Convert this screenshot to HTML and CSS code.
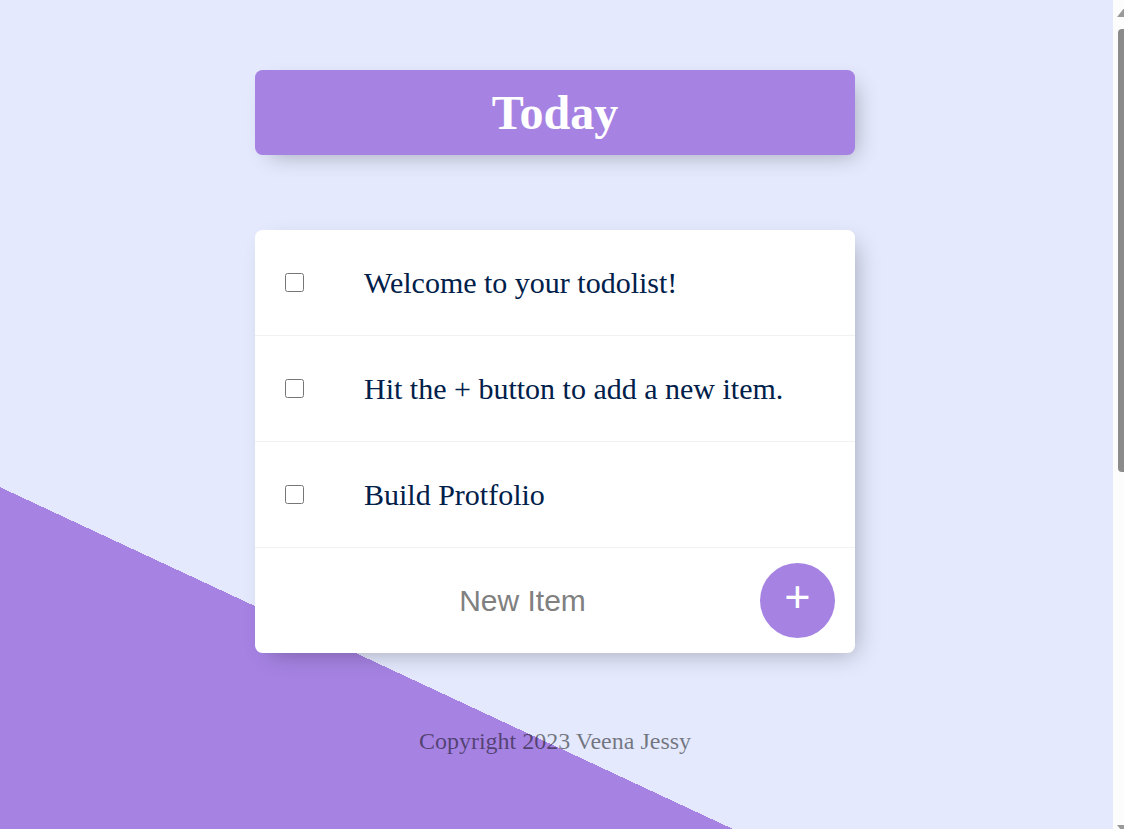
FILE: index.html
```html
<!DOCTYPE html>
<html lang="en">
<head>
<meta charset="utf-8">
<title>To-Do List</title>
<link rel="stylesheet" href="styles.css">
</head>
<body>
  <div class="page">
    <div class="box heading">
      <h1 class="title">Today</h1>
    </div>

    <div class="box list">
      <div class="item">
        <input class="check" type="checkbox">
        <p class="text">Welcome to your todolist!</p>
      </div>
      <div class="item">
        <input class="check" type="checkbox">
        <p class="text">Hit the + button to add a new item.</p>
      </div>
      <div class="item">
        <input class="check" type="checkbox">
        <p class="text">Build Protfolio</p>
      </div>
      <form class="item new-item" onsubmit="return false;">
        <input class="new-input" type="text" name="newItem" placeholder="New Item" autocomplete="off">
        <button class="add-btn" type="submit" name="list" value="Today">+</button>
      </form>
    </div>

    <footer class="footer">Copyright 2023 Veena Jessy</footer>
  </div>

  <div class="scrollbar" aria-hidden="true">
    <svg class="scrollbar-svg" width="11" height="829" viewBox="0 0 11 829">
      <polygon points="12,7 4,17 20,17" fill="#9a9a9a"/>
      <rect x="5" y="29" width="12" height="443" rx="4" ry="4" fill="#8b8b8b"/>
      <polygon points="4,825 20,825 12,835" fill="#9a9a9a"/>
    </svg>
  </div>
</body>
</html>
```

FILE: styles.css
```css
html {
  background-color: #E4E9FD;
  background-image: linear-gradient(25deg, #A683E3 50%, #E4E9FD 50%);
  background-repeat: no-repeat;
  min-height: 1492px;
  margin-right: 14px;
}

body {
  margin: 0;
  font-family: "Liberation Serif", "Times New Roman", serif;
}

.page {
  padding-top: 70px;
}

.box {
  width: 600px;
  margin: 0 auto 75px;
  background: #ffffff;
  border-radius: 7.5px;
  box-shadow: 7.5px 7.5px 22.5px -7.5px rgba(0, 0, 0, 0.3);
}

.heading {
  background-color: #A683E3;
  text-align: center;
}

.title {
  margin: 0;
  padding: 15px;
  font-size: 48px;
  line-height: 55px;
  font-weight: bold;
  color: #ffffff;
}

.item {
  height: 105px;
  display: flex;
  align-items: center;
  border-bottom: 1px solid #F1F1F1;
}

.item:last-child {
  border-bottom: 0;
}

.check {
  margin: 30px;
  width: 19px;
  height: 19px;
  flex: none;
}

.text {
  margin: 0;
  padding: 30px;
  font-size: 30px;
  color: #00204a;
}

.new-item {
  margin: 0 0 0 30px;
}

.new-input {
  width: 469px;
  height: 90px;
  padding: 1.5px 3px;
  border: none;
  background: transparent;
  text-align: center;
  font-family: "Liberation Sans", Arial, sans-serif;
  font-size: 30px;
  color: #000;
  outline: none;
}

.new-input::placeholder {
  color: grey;
  opacity: 1;
}

.add-btn {
  width: 75px;
  height: 75px;
  flex: none;
  border-radius: 50%;
  border: 0;
  padding: 0 0 9px;
  background-color: #A683E3;
  color: #ffffff;
  font-family: "Liberation Sans", Arial, sans-serif;
  font-size: 45px;
  line-height: 1;
}

.footer {
  text-align: center;
  font-size: 24px;
  color: rgba(0, 0, 0, 0.5);
}

.scrollbar {
  position: fixed;
  top: 0;
  right: 0;
  width: 11px;
  height: 100vh;
  background: #fcfcfc;
  overflow: hidden;
}

.scrollbar-svg {
  display: block;
}
```
